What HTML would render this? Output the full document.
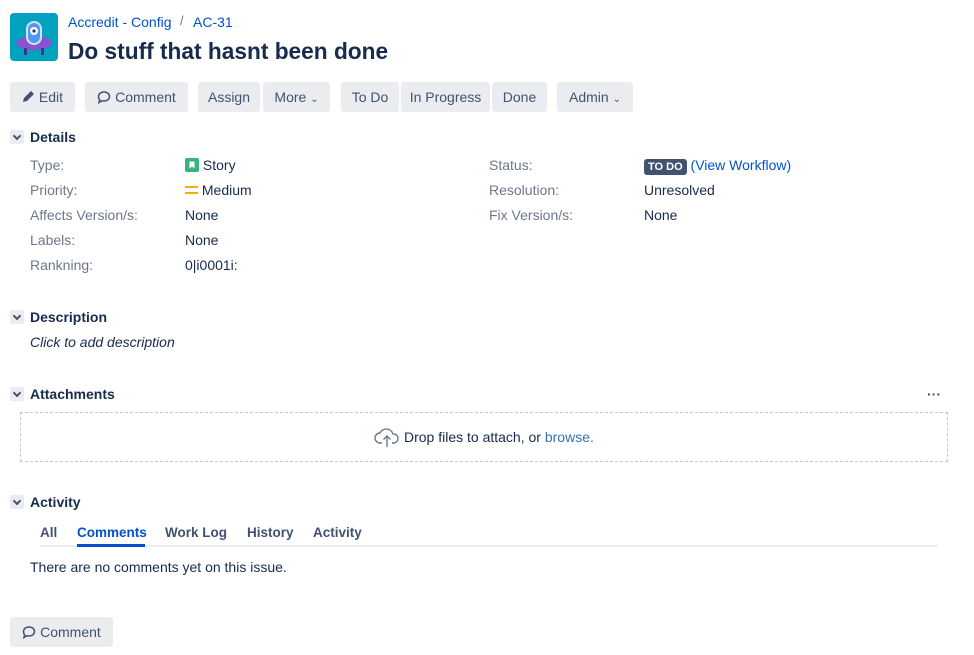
<!DOCTYPE html>
<html><head><meta charset="utf-8"><style>
*{box-sizing:border-box;margin:0;padding:0}
body{width:974px;height:655px;background:#fff;font-family:"Liberation Sans",sans-serif;font-size:14px;color:#172b4d;position:relative;overflow:hidden}
.a{position:absolute;white-space:nowrap}
.btn{position:absolute;top:82px;height:30px;background:#ebecf0;border-radius:3px;color:#42526e;font-size:14px;line-height:30px;text-align:center}
.lbl{position:absolute;color:#6b778c}
.sec{position:absolute;left:10px;font-weight:bold;font-size:14px}
.sec .t{position:absolute;left:0;top:1px;width:14px;height:14px;background:#ebecf0;border-radius:2px}
.sec .t:after{content:"";position:absolute;left:4px;top:3px;width:4px;height:4px;border-right:2px solid #42526e;border-bottom:2px solid #42526e;transform:rotate(45deg)}
.sec span{margin-left:20px}
.blue{color:#0052cc}
.tab{position:absolute;top:525px;color:#42526e;font-weight:bold;font-size:13.5px}
</style></head><body>
<div class="a" style="left:10px;top:13px;width:48px;height:48px;background:#00a3bf;border-radius:4px;overflow:hidden">
<svg width="48" height="48"><ellipse cx="24" cy="30" rx="18" ry="7" fill="#8954d1"/><rect x="14" y="35" width="3" height="7" fill="#403294"/><rect x="31" y="35" width="3" height="7" fill="#403294"/><rect x="16" y="8" width="16" height="24" rx="8" fill="#dfe1e6"/><rect x="18" y="10" width="12" height="20" rx="6" fill="#4c9aff"/><circle cx="24" cy="18" r="4" fill="#fff"/><circle cx="24" cy="18" r="1.6" fill="#253858"/></svg></div>
<div class="a blue" style="left:68px;top:14px">Accredit - Config</div>
<div class="a" style="left:180px;top:13px;color:#6b778c;font-size:13px">/</div>
<div class="a blue" style="left:193px;top:14px">AC-31</div>
<div class="a" style="left:68px;top:38px;font-size:22.7px;font-weight:bold">Do stuff that hasnt been done</div>

<div class="btn" style="left:10px;width:65px"><svg width="13" height="13" viewBox="0 0 13 13" style="vertical-align:-1px"><path d="M1 12l1-4 7-7 3 3-7 7z" fill="#42526e"/></svg> Edit</div>
<div class="btn" style="left:85px;width:103px"><svg width="14" height="14" viewBox="0 0 14 14" style="vertical-align:-2px"><path d="M7 2c3.3 0 5.5 2 5.5 4.5S10.3 11 7 11c-.8 0-1.5-.1-2.2-.3L2 12.5l.6-2.6C1.9 9 1.5 7.8 1.5 6.5 1.5 4 3.7 2 7 2z" fill="none" stroke="#42526e" stroke-width="1.5"/></svg> Comment</div>
<div class="btn" style="left:198px;width:62px">Assign</div>
<div class="btn" style="left:263px;width:67px">More <span style="font-size:10px">&#8964;</span></div>
<div class="btn" style="left:341px;width:58px">To Do</div>
<div class="btn" style="left:401px;width:89px">In Progress</div>
<div class="btn" style="left:492px;width:55px">Done</div>
<div class="btn" style="left:557px;width:76px">Admin <span style="font-size:10px">&#8964;</span></div>

<div class="sec" style="top:129px"><div class="t"></div><span>Details</span></div>
<div class="lbl" style="left:30px;top:157px">Type:</div>
<div class="lbl" style="left:30px;top:182px">Priority:</div>
<div class="lbl" style="left:30px;top:207px">Affects Version/s:</div>
<div class="lbl" style="left:30px;top:232px">Labels:</div>
<div class="lbl" style="left:30px;top:257px">Rankning:</div>
<div class="a" style="left:185px;top:157px"><span style="display:inline-block;width:14px;height:14px;background:#36b37e;border-radius:2px;vertical-align:-2px;position:relative"><svg width="14" height="14" style="position:absolute;left:0;top:0"><path d="M4.5 3.5h5v7l-2.5-2-2.5 2z" fill="#fff"/></svg></span> Story</div>
<div class="a" style="left:185px;top:182px"><span style="display:inline-block;width:13px;height:8px;border-top:2px solid #ffab00;border-bottom:2px solid #ffab00;vertical-align:1px"></span> Medium</div>
<div class="a" style="left:185px;top:207px">None</div>
<div class="a" style="left:185px;top:232px">None</div>
<div class="a" style="left:185px;top:257px">0|i0001i:</div>
<div class="lbl" style="left:489px;top:157px">Status:</div>
<div class="lbl" style="left:489px;top:182px">Resolution:</div>
<div class="lbl" style="left:489px;top:207px">Fix Version/s:</div>
<div class="a" style="left:644px;top:157px"><span style="display:inline-block;background:#42526e;color:#fff;font-size:11px;font-weight:bold;padding:0 4px;border-radius:3px;line-height:16px">TO DO</span> <span class="blue">(View Workflow)</span></div>
<div class="a" style="left:644px;top:182px">Unresolved</div>
<div class="a" style="left:644px;top:207px">None</div>

<div class="sec" style="top:309px"><div class="t"></div><span>Description</span></div>
<div class="a" style="left:30px;top:334px;font-style:italic">Click to add description</div>

<div class="sec" style="top:386px"><div class="t"></div><span>Attachments</span></div>
<div class="a" style="left:927px;top:386px;font-weight:bold;color:#42526e">···</div>
<div class="a" style="left:20px;top:412px;width:928px;height:50px;border:1px dashed #c1c7d0;text-align:center;line-height:48px"><svg width="26" height="22" viewBox="0 0 26 22" style="vertical-align:-6px"><path d="M8 17H6a5 5 0 0 1 0-10 7 7 0 0 1 13 1 4.5 4.5 0 0 1 1 9h-2" fill="none" stroke="#6b778c" stroke-width="1.4"/><path d="M13 21V10M9.5 13.5 13 10l3.5 3.5" fill="none" stroke="#6b778c" stroke-width="1.4"/></svg> Drop files to attach, or <span style="color:#3572b0">browse.</span></div>

<div class="sec" style="top:494px"><div class="t"></div><span>Activity</span></div>
<div class="a" style="left:40px;top:545px;width:898px;height:2px;background:#ebecf0"></div>
<div class="a" style="left:77px;top:544px;width:68px;height:3px;background:#0052cc"></div>
<div class="tab" style="left:40px">All</div>
<div class="tab" style="left:77px;color:#0052cc">Comments</div>
<div class="tab" style="left:165px">Work Log</div>
<div class="tab" style="left:247px">History</div>
<div class="tab" style="left:313px">Activity</div>
<div class="a" style="left:30px;top:559px">There are no comments yet on this issue.</div>

<div class="btn" style="left:10px;top:617px;width:103px"><svg width="14" height="14" viewBox="0 0 14 14" style="vertical-align:-2px"><path d="M7 2c3.3 0 5.5 2 5.5 4.5S10.3 11 7 11c-.8 0-1.5-.1-2.2-.3L2 12.5l.6-2.6C1.9 9 1.5 7.8 1.5 6.5 1.5 4 3.7 2 7 2z" fill="none" stroke="#42526e" stroke-width="1.5"/></svg> Comment</div>
</body></html>
